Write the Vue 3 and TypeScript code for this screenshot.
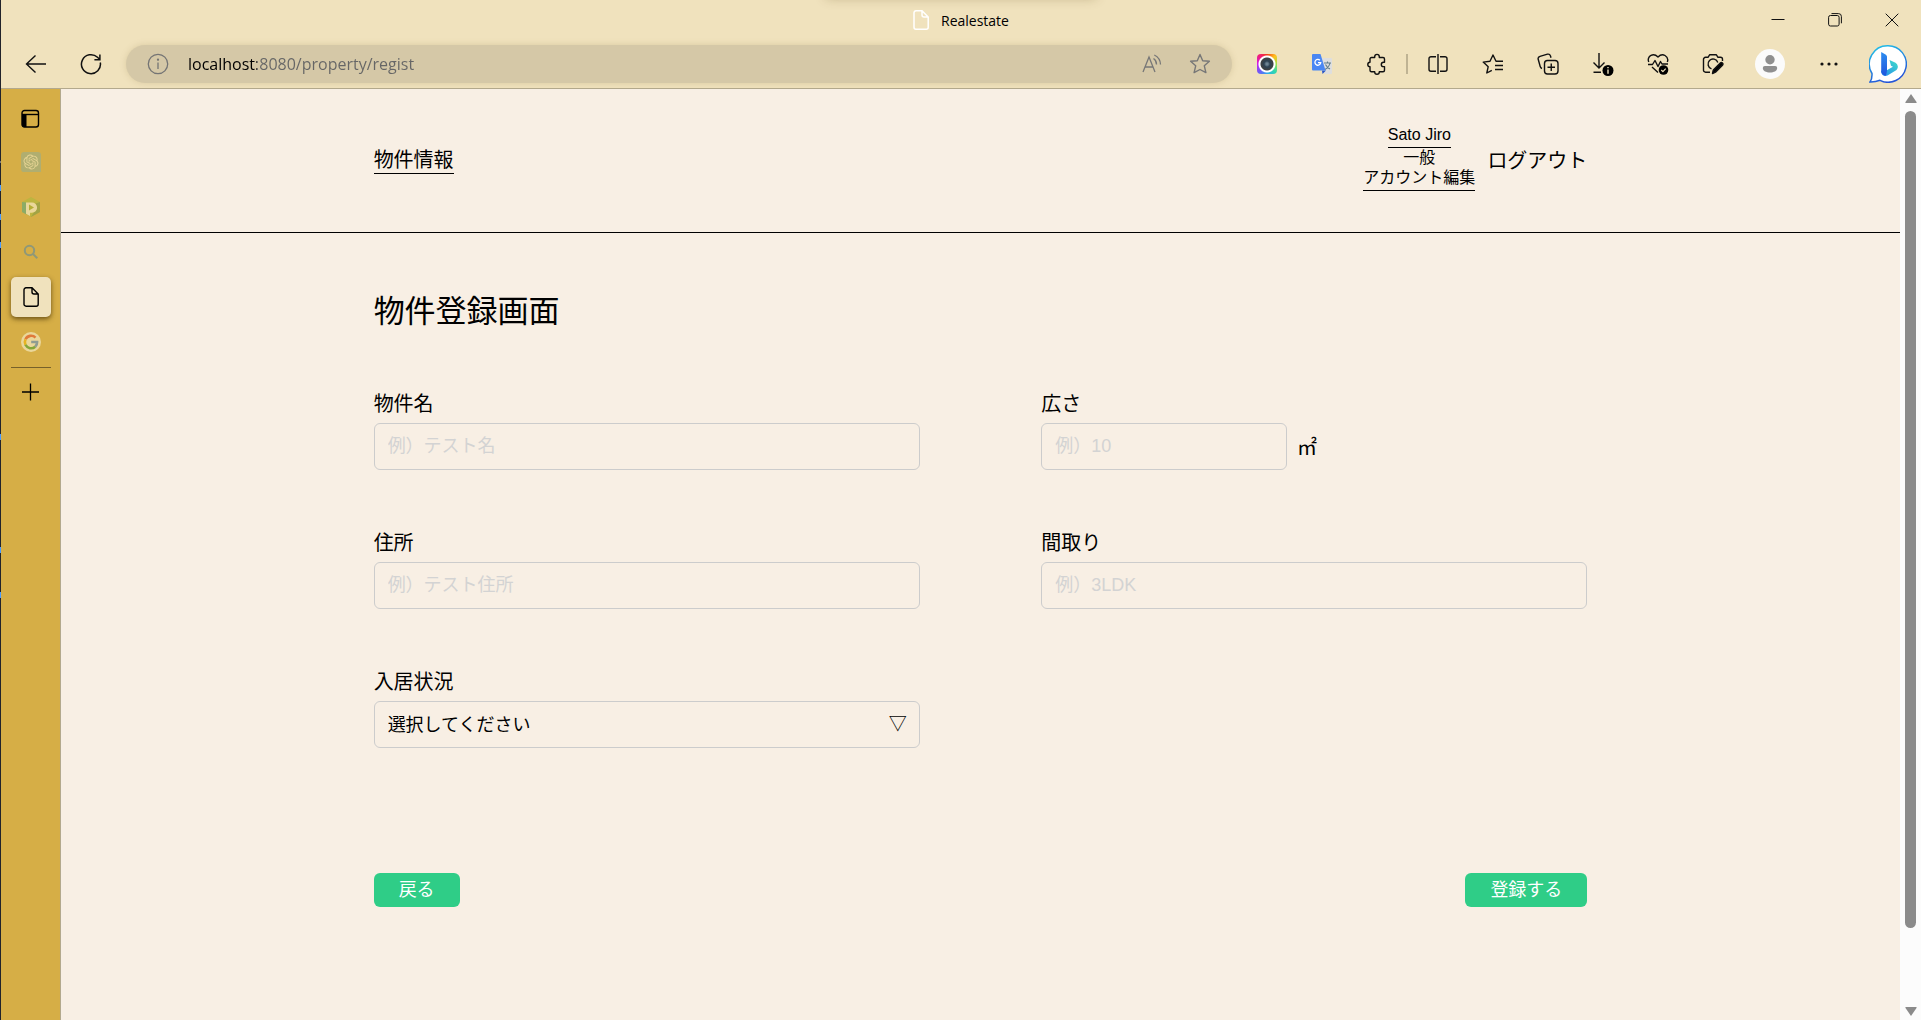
<script setup lang="ts">
import { ref } from 'vue'

interface Property {
  name: string
  area: string
  address: string
  layout: string
  status: string
}

const url = ref('localhost:8080/property/regist')
const property = ref<Property>({ name: '', area: '', address: '', layout: '', status: '' })
const statuses: string[] = ['入居中', '空室']
</script>

<template>
  <div class="desktop">
    <div class="edge"></div>
    <div class="window">
      <header class="chrome">
        <div class="titlebar">
          <div class="hint"></div>
          <div class="title">
            <svg width="16" height="20" viewBox="0 0 16 20" fill="none" stroke="#fff" stroke-width="1.5">
              <path d="M3 .8h6l6.200 6.200v10.200a2 2 0 0 1-2 2H3a2 2 0 0 1-2-2V2.800a2 2 0 0 1 2-2zM9 .8V5a2 2 0 0 0 2 2h4.200" />
            </svg>
            <span>Realestate</span>
          </div>
          <div class="window-buttons">
            <button type="button" aria-label="最小化">
              <svg width="14" height="14" viewBox="0 0 14 14" stroke="#111"><path d="M.5 6.500h13" /></svg>
            </button>
            <button type="button" aria-label="元に戻す">
              <svg width="14" height="14" viewBox="0 0 14 14" fill="none" stroke="#111">
                <rect x=".6" y="2.500" width="10.500" height="10.500" rx="1.800" />
                <path d="M3.500.6h7a2.900 2.900 0 0 1 2.900 2.900v6.800" />
              </svg>
            </button>
            <button type="button" aria-label="閉じる">
              <svg width="14" height="14" viewBox="0 0 14 14" stroke="#111"><path d="M.7.7l12.600 12.600M13.300.7.7 13.300" /></svg>
            </button>
          </div>
        </div>

        <div class="toolbar">
          <div class="nav-buttons">
            <button type="button" aria-label="戻る">
              <svg width="22" height="20" viewBox="0 0 22 20" fill="none" stroke="#111" stroke-width="1.400">
                <path d="M21 10H1.500M10.500 1.500 1.500 10l9 8.500" />
              </svg>
            </button>
            <button type="button" aria-label="更新">
              <svg width="22" height="22" viewBox="0 0 22 22" fill="none" stroke="#111" stroke-width="1.500">
                <path d="M20.300 9.500A9.500 9.500 0 1 1 17.500 4.300L19.800 6.500M19.900 1.500v5.300h-5.500" />
              </svg>
            </button>
          </div>
          <div class="address">
            <button type="button" aria-label="サイト情報">
              <svg width="22" height="22" viewBox="0 0 22 22" fill="none" stroke="#747474" stroke-width="1.300">
                <circle cx="11" cy="11" r="9.700" />
                <path d="M11 9.500V16" />
                <circle cx="11" cy="6.700" r=".5" fill="#747474" />
              </svg>
            </button>
            <input v-model="url" type="text" aria-label="アドレス" />
            <button type="button" aria-label="音声で読み上げる">
              <svg width="20" height="20" viewBox="0 0 20 20" fill="none" stroke="#777" stroke-width="1.300">
                <path d="M1 18 7 3l6 15M3 13h8M11.500 4.500a7 7 0 0 1 3 6M12.300 1a11 11 0 0 1 6.200 9.500" />
              </svg>
            </button>
            <button type="button" aria-label="お気に入りに追加">
              <svg width="22" height="22" viewBox="0 0 22 22" fill="none" stroke="#777" stroke-width="1.400" stroke-linejoin="round">
                <path d="m11 1.500 2.700 6.200 6.700.6-5.100 4.500 1.600 6.800-5.900-3.100-5.900 3.100 1.600-6.800L1.600 8.300l6.700-.6z" />
              </svg>
            </button>
          </div>

          <div class="tools">
            <button type="button" aria-label="カメラ拡張機能"><span class="lens"></span></button>
            <button type="button" aria-label="翻訳">
              <svg width="20" height="20" viewBox="0 0 20 20" fill="none">
                <path d="M8 4h11a1 1 0 0 1 1 1v14a1 1 0 0 1-1 1h-6z" fill="#dedede" />
                <path d="M12 9h7M15.500 7.500V9M18 9c-.6 3-2.500 5-5 6.500M13.500 10.500c1 2 2.500 3.500 4.500 4.500" stroke="#607d8b" stroke-width="1.100" />
                <path d="m10 16.500 4 0-3.500 3.500z" fill="#2a56c6" />
                <path d="M1 0h7.500l5 16.500H1a1 1 0 0 1-1-1V1a1 1 0 0 1 1-1z" fill="#4a87f3" />
                <path d="M7.900 6.300A2.900 2.900 0 1 0 8.700 8.700H6" stroke="#fff" stroke-width="1.300" />
              </svg>
            </button>
            <button type="button" aria-label="拡張機能">
              <svg width="20" height="22" viewBox="0 0 20 22" fill="none" stroke="#111" stroke-width="1.400" stroke-linejoin="round">
                <path d="M4.500 4.500h3.200v-.8a2.300 2.300 0 0 1 4.600 0v.8h3.700a1.500 1.500 0 0 1 1.500 1.500v3.200h-1a2.200 2.200 0 0 0 0 4.400h1v3.600a1.500 1.500 0 0 1-1.500 1.500h-3.700v.3a2.300 2.300 0 0 1-4.600 0v-.3H4.500A1.500 1.500 0 0 1 3 17.200v-3.600a2.200 2.200 0 0 1 0-4.400V6a1.500 1.500 0 0 1 1.500-1.500z" />
              </svg>
            </button>
            <i class="divider"></i>
            <button type="button" aria-label="画面を分割する">
              <svg width="20" height="20" viewBox="0 0 20 20" fill="none" stroke="#111" stroke-width="1.400">
                <path d="M8 2.700H3a2 2 0 0 0-2 2v10.600a2 2 0 0 0 2 2h5M12 2.700h5a2 2 0 0 1 2 2v10.600a2 2 0 0 1-2 2h-5M10 0v20" />
              </svg>
            </button>
            <button type="button" aria-label="お気に入り">
              <svg width="22" height="20" viewBox="0 0 22 20" fill="none" stroke="#111" stroke-width="1.400" stroke-linejoin="round">
                <path d="M21 7.300h-7L11 1 8 7.300l-6.800.8 5 4.600L4.800 19l5-2.700M13 11.500h8M13 15.500h8" />
              </svg>
            </button>
            <button type="button" aria-label="コレクション">
              <svg width="22" height="22" viewBox="0 0 22 22" fill="none" stroke="#111" stroke-width="1.400">
                <rect x="7.500" y="7.500" width="13.500" height="13.500" rx="3" />
                <path d="M14.250 10.500v7.500M10.500 14.250h7.500M5 15.500c-1-.4-1.500-1-1.800-2L1.200 6.300c-.4-1.500.3-2.500 1.800-3L10.500 1.200c1.500-.4 2.500.4 3 1.800l.5 1.800" />
              </svg>
            </button>
            <button type="button" aria-label="ダウンロード">
              <svg width="22" height="24" viewBox="0 0 22 24" fill="none" stroke="#111" stroke-width="1.400">
                <path d="M7 1v15M1.500 10.500 7 16l5.500-5.500M1.500 20.300H9" />
                <circle cx="16" cy="18.500" r="5.500" fill="#000" stroke="none" />
                <path d="M16 17.500v4.200M16 15v1.200" stroke="#f0e2bd" />
              </svg>
            </button>
            <button type="button" aria-label="ブラウザーのエッセンシャル">
              <svg width="22" height="22" viewBox="0 0 22 22" fill="none" stroke="#111" stroke-width="1.400" stroke-linejoin="round">
                <path d="M1.800 9A5 5 0 0 1 4 2.300C6.800 1 9 2 11 4c2-2 4.500-3 7-1.500 2.500 1.500 3.300 4 2.300 6.500M1 11.500h4.500L8 7.500l3 6 2.500-5 1.500 2.500h6M5 14l6 5.500" />
                <circle cx="16.500" cy="17" r="4.800" fill="#000" stroke="none" />
                <path d="m14.300 17 1.600 1.600 2.800-3" stroke="#f0e2bd" stroke-width="1.200" />
              </svg>
            </button>
            <button type="button" aria-label="スクリーンショット">
              <svg width="22" height="22" viewBox="0 0 22 22" fill="none" stroke="#111" stroke-width="1.400" stroke-linejoin="round">
                <path d="M8 19.200H3.500a2 2 0 0 1-2-2V6.300a2 2 0 0 1 2-2H6l1.600-2.500h6.800L16 4.300h2.500a2 2 0 0 1 2 2V8M9.500 15.800A5 5 0 1 1 15.800 9.500" />
                <path d="m10.500 20.500.8-3.500 7-7c1.500-1.300 3.500.6 2.200 2.200l-7 7z" fill="#000" />
              </svg>
            </button>
            <button type="button" class="wide" aria-label="プロファイル">
              <svg width="30" height="30" viewBox="0 0 30 30" fill="#8f8f8f">
                <circle cx="15" cy="15" r="15" fill="#fbfbfb" />
                <circle cx="15" cy="10.700" r="4.700" />
                <path d="M9.800 17h10.400a2 2 0 0 1 2 2c0 3-3.500 4.500-7.200 4.500S7.800 22 7.800 19a2 2 0 0 1 2-2z" />
              </svg>
            </button>
            <button type="button" class="wide" aria-label="設定など">
              <svg width="18" height="4" viewBox="0 0 18 4" fill="#111">
                <circle cx="2" cy="2" r="1.600" /><circle cx="9" cy="2" r="1.600" /><circle cx="16" cy="2" r="1.600" />
              </svg>
            </button>
            <button type="button" class="wide" aria-label="Bing">
              <svg width="38" height="38" viewBox="0 0 38 38">
                <defs>
                  <linearGradient id="bubble" x1="0" y1="0" x2=".4" y2="1">
                    <stop offset="0" stop-color="#22c8e8" /><stop offset="1" stop-color="#2455d8" />
                  </linearGradient>
                  <linearGradient id="stem" x1="0" y1="0" x2="0" y2="1">
                    <stop offset="0" stop-color="#2d8df0" /><stop offset="1" stop-color="#1f55dd" />
                  </linearGradient>
                  <linearGradient id="bowl" x1="1" y1="0" x2="0" y2="1">
                    <stop offset="0" stop-color="#3fe0c8" /><stop offset="1" stop-color="#2486f0" />
                  </linearGradient>
                </defs>
                <path d="M19 .8a18.200 18.200 0 1 1-8 34.500c-3 1.200-6.500 1.800-10 1.700 1.600-2.300 2.200-5 2-8.500A18.200 18.200 0 0 1 19 .8z" fill="#fff" stroke="url(#bubble)" stroke-width="1.500" />
                <path d="M20.500 15 26.500 17.800a4.500 4.500 0 0 1 1 7.200L18.500 30.500c-3.500 1.500-6.500-1-6.500-4.800l4 .5 8-4.500-2-1z" fill="url(#bowl)" />
                <path d="M12.200 7 16.500 9.500c1 .7 1.500 1.500 1.500 2.700V26l-1 4.500c-2.800.2-4.800-1.800-4.800-4.500z" fill="url(#stem)" />
              </svg>
            </button>
          </div>
        </div>
      </header>

      <div class="body">
        <nav class="tabs" aria-label="タブ">
          <button type="button" class="tab pane" aria-label="タブ操作メニュー">
            <svg width="20" height="20" viewBox="0 0 20 20" fill="none" stroke="#000" stroke-width="1.400">
              <rect x="1" y="1.500" width="16.500" height="16.500" rx="2.500" />
              <path d="M1 5.500h16.500" /><path d="M1 5h4.500v13h-2A2.500 2.500 0 0 1 1 15.500z" fill="#000" stroke="none" />
            </svg>
          </button>
          <div class="tab-list">
            <button type="button" class="tab" aria-label="ChatGPT">
              <svg width="20" height="20" viewBox="0 0 32 32">
                <path d="M5 0h22a5 5 0 0 1 5 5v27H5a5 5 0 0 1-5-5V5a5 5 0 0 1 5-5z" fill="#b0ae70" />
                <path transform="translate(4 4)" fill="#e6d494" d="M22.2819 9.8211a5.9847 5.9847 0 0 0-.5157-4.9108 6.0462 6.0462 0 0 0-6.5098-2.9A6.0651 6.0651 0 0 0 4.9807 4.1818a5.9847 5.9847 0 0 0-3.9977 2.9 6.0462 6.0462 0 0 0 .7427 7.0966 5.98 5.98 0 0 0 .511 4.9107 6.051 6.051 0 0 0 6.5146 2.9001A5.9847 5.9847 0 0 0 13.2599 24a6.0557 6.0557 0 0 0 5.7718-4.2058 5.9894 5.9894 0 0 0 3.9977-2.9001 6.0557 6.0557 0 0 0-.7475-7.0729zm-9.022 12.6081a4.4755 4.4755 0 0 1-2.8764-1.0408l.1419-.0804 4.7783-2.7582a.7948.7948 0 0 0 .3927-.6813v-6.7369l2.02 1.1686a.071.071 0 0 1 .038.052v5.5826a4.504 4.504 0 0 1-4.4945 4.4944zm-9.6607-4.1254a4.4708 4.4708 0 0 1-.5346-3.0137l.142.0852 4.783 2.7582a.7712.7712 0 0 0 .7806 0l5.8428-3.3685v2.3324a.0804.0804 0 0 1-.0332.0615L9.74 19.9502a4.4992 4.4992 0 0 1-6.1408-1.6464zM2.3408 7.8956a4.485 4.485 0 0 1 2.3655-1.9728V11.6a.7664.7664 0 0 0 .3879.6765l5.8144 3.3543-2.0201 1.1685a.0757.0757 0 0 1-.071 0l-4.8303-2.7865A4.504 4.504 0 0 1 2.3408 7.872zm16.5963 3.8558L13.1038 8.364 15.1192 7.2a.0757.0757 0 0 1 .071 0l4.8303 2.7913a4.4944 4.4944 0 0 1-.6765 8.1042v-5.6772a.79.79 0 0 0-.407-.667zm2.0107-3.0231l-.142-.0852-4.7735-2.7818a.7759.7759 0 0 0-.7854 0L9.409 9.2297V6.8974a.0662.0662 0 0 1 .0284-.0615l4.8303-2.7866a4.4992 4.4992 0 0 1 6.6802 4.66zM8.3065 12.863l-2.02-1.1638a.0804.0804 0 0 1-.038-.0567V6.0742a4.4992 4.4992 0 0 1 7.3757-3.4537l-.142.0805L8.704 5.459a.7948.7948 0 0 0-.3927.6813zm1.0976-2.3654l2.602-1.4998 2.6069 1.4998v2.9994l-2.5974 1.4997-2.6067-1.4997Z" />
              </svg>
            </button>
            <button type="button" class="tab" aria-label="動画">
              <svg width="20" height="20" viewBox="0 0 20 20">
                <path d="M10 0 19 5v10l-9 5-9-5V5z" fill="#bdb540" />
                <path d="M1 5v10l4.500 2.500V5.500z" fill="#8cab66" />
                <path d="m19 5-4.500 1.500L13 15l-3 5 9-5z" fill="#a2a344" />
                <path d="M5 5.500h6a5 5 0 0 1 0 10.200H9V19l-4-2.200z" fill="#ead79a" />
                <path d="M8 7.500v6l5-3z" fill="#b5ae35" />
              </svg>
            </button>
            <button type="button" class="tab" aria-label="検索">
              <svg width="20" height="20" viewBox="0 0 20 20" fill="none" stroke="#8f9878" stroke-width="2">
                <circle cx="8.500" cy="8.500" r="4.700" /><path d="m12 12 4.300 4.300" />
              </svg>
            </button>
            <button type="button" class="tab active" aria-label="Realestate">
              <svg width="16" height="20" viewBox="0 0 16 20" fill="none" stroke="#000" stroke-width="1.400">
                <path d="M3 .8h6l6.200 6.200v10.200a2 2 0 0 1-2 2H3a2 2 0 0 1-2-2V2.800a2 2 0 0 1 2-2zM9 .8V5a2 2 0 0 0 2 2h4.200" />
              </svg>
            </button>
            <button type="button" class="tab" aria-label="Google">
              <svg width="20" height="20" viewBox="0 0 20 20" fill="none" stroke-width="2.600">
                <circle cx="10" cy="10" r="10" fill="#ead79b" />
                <path d="M14.500 5.600A6.200 6.200 0 0 0 4.500 7.300" stroke="#e07a3a" />
                <path d="M4.500 7.300a6.200 6.200 0 0 0 0 5.500" stroke="#e6b422" />
                <path d="M4.500 12.800a6.200 6.200 0 0 0 9.700 1.900" stroke="#84a638" />
                <path d="M14.200 14.700A6.200 6.200 0 0 0 16.100 10H10.200" stroke="#8e9c92" />
              </svg>
            </button>
          </div>
          <i class="rule"></i>
          <button type="button" class="tab" aria-label="新しいタブ">
            <svg width="18" height="18" viewBox="0 0 18 18" stroke="#000" stroke-width="1.300"><path d="M8.500 .5v17M0 9h17" /></svg>
          </button>
        </nav>

        <div class="page">
          <header class="site-header">
            <a href="#" class="underlined brand">物件情報</a>
            <div class="account">
              <div class="user">
                <a href="#" class="underlined latin">Sato Jiro</a>
                <span>一般</span>
                <a href="#" class="underlined">アカウント編集</a>
              </div>
              <a href="#" class="logout">ログアウト</a>
            </div>
          </header>

          <main class="content">
            <h1>物件登録画面</h1>
            <form @submit.prevent>
              <div class="fields">
                <div class="field">
                  <label for="name">物件名</label>
                  <input id="name" v-model="property.name" type="text" placeholder="例）テスト名" />
                </div>
                <div class="field">
                  <label for="area">広さ</label>
                  <div class="with-unit">
                    <input id="area" v-model="property.area" type="text" placeholder="例）10" />
                    <span>㎡</span>
                  </div>
                </div>
                <div class="field">
                  <label for="address">住所</label>
                  <input id="address" v-model="property.address" type="text" placeholder="例）テスト住所" />
                </div>
                <div class="field">
                  <label for="layout">間取り</label>
                  <input id="layout" v-model="property.layout" type="text" placeholder="例）3LDK" />
                </div>
                <div class="field">
                  <label for="status">入居状況</label>
                  <div class="select">
                    <select id="status" v-model="property.status">
                      <option value="">選択してください</option>
                      <option v-for="status in statuses" :key="status" :value="status">{{ status }}</option>
                    </select>
                    <span class="arrow">▽</span>
                  </div>
                </div>
              </div>
              <div class="actions">
                <button type="button">戻る</button>
                <button type="submit">登録する</button>
              </div>
            </form>
          </main>
        </div>

        <div class="scrollbar">
          <svg width="12" height="9" viewBox="0 0 12 9" fill="#8b8b8b"><path d="M6 0 11.500 8a.6.6 0 0 1-.5 1H1a.6.6 0 0 1-.5-1z" /></svg>
          <div class="track"><div class="thumb"></div></div>
          <svg width="12" height="9" viewBox="0 0 12 9" fill="#8b8b8b"><path d="M6 9 11.500 1a.6.6 0 0 0-.5-1H1a.6.6 0 0 0-.5 1z" /></svg>
        </div>
      </div>
    </div>
  </div>
</template>

<style>
body {
  margin: 0;
  overflow: hidden;
}
</style>

<style scoped>
* {
  box-sizing: border-box;
}

button,
input,
select {
  font: inherit;
  color: inherit;
  background: none;
  border: 0;
  margin: 0;
  padding: 0;
}

svg {
  display: block;
  flex: none;
}

.desktop {
  display: flex;
  height: 100vh;
  color: #000;
  font-family: "Liberation Sans", "Noto Sans CJK JP", sans-serif;
  font-weight: 400;
}

/* Sliver of the window behind */
.edge {
  width: 1px;
  background: linear-gradient(
    #21232b 161px, #777 161px, #777 163px, #21232b 163px, #21232b 185px,
    #4a9cff 185px, #4a9cff 191px, #21232b 191px, #21232b 214px,
    #4a9cff 214px, #4a9cff 220px, #21232b 220px, #21232b 242px,
    #4a9cff 242px, #4a9cff 248px, #21232b 248px, #21232b 434px,
    #4a9cff 434px, #4a9cff 440px, #21232b 440px, #21232b 547px,
    #4a9cff 547px, #4a9cff 553px, #21232b 553px, #21232b 592px,
    #4a9cff 592px, #4a9cff 598px, #21232b 598px
  );
}

.window {
  flex: 1;
  min-width: 0;
  display: flex;
  flex-direction: column;
}

.chrome {
  background: #f0e2bd;
  border-bottom: 1px solid #b3a98d;
  font-family: "Open Sans", "Noto Sans", sans-serif;
}

.titlebar {
  position: relative;
  display: grid;
  grid-template-columns: 1fr auto 1fr;
  align-items: center;
  height: 40px;
  overflow: hidden;
}

.hint {
  position: absolute;
  top: -22px;
  left: 0;
  right: 0;
  width: 270px;
  height: 20px;
  margin: auto;
  box-shadow: 0 0 12px rgba(90, 70, 20, 0.3);
}

.title {
  grid-column: 2;
  display: flex;
  align-items: center;
  gap: 12px;
  font-size: 14px;
}

.window-buttons {
  display: flex;
  justify-content: flex-end;
  padding-right: 1px;
}

.window-buttons button {
  display: grid;
  place-items: center;
  width: 57px;
  height: 40px;
}

.toolbar {
  display: flex;
  align-items: center;
  height: 48px;
  padding-right: 4px;
}

.nav-buttons {
  display: flex;
  padding: 0 8px 0 7px;
}

.nav-buttons button,
.tools button {
  display: grid;
  place-items: center;
  width: 55px;
  height: 40px;
}

.tools {
  display: flex;
  align-items: center;
  padding-left: 7px;
}

.tools button.wide {
  width: 59px;
}

.address {
  flex: 1;
  display: flex;
  align-items: center;
  height: 38px;
  padding: 0 21px;
  border-radius: 19px;
  background: #d5c8a7;
  box-shadow: 0 0 6px rgba(150, 130, 80, 0.25);
}

.address input {
  flex: 1;
  min-width: 0;
  padding: 0 8px;
  margin-left: 11px;
  font-size: 16px;
  line-height: 24px;
  color: transparent;
  background: linear-gradient(to right, #000 77px, #666 77px);
  background-clip: text;
  outline: 0;
}

.address button + button,
.address input + button {
  margin-left: 27px;
}

.lens {
  display: block;
  width: 20px;
  height: 20px;
  border-radius: 4px;
  background:
    radial-gradient(circle, #6d8494 0 1px, #2f4252 3px 4px, #3c4145 5px 6px, #fff 7px 8px, transparent 9px),
    conic-gradient(#f43a1c, #ffc21c 45deg, #9be04a 90deg, #2fd8b0 135deg, #2fa8f0 180deg, #6f5cf5 225deg, #d01cf0 270deg, #f01c7a 315deg, #f43a1c);
}

.divider {
  width: 2px;
  height: 20px;
  margin: 0 2px;
  background: #bfb393;
}

.body {
  flex: 1;
  min-height: 0;
  display: flex;
  background: #f8efe4;
}

.tabs {
  display: flex;
  flex-direction: column;
  align-items: center;
  width: 60px;
  padding-top: 10px;
  background: #d6ae46;
  border-right: 1px solid #b3a98d;
}

.tab {
  display: grid;
  place-items: center;
  width: 40px;
  height: 40px;
  border-radius: 5px;
}

.tab.active {
  background: #f0e2bd;
  box-shadow: 0 2px 5px rgba(60, 40, 0, 0.7);
}

.tab-list {
  display: flex;
  flex-direction: column;
  gap: 5px;
  margin-top: 3px;
}

.rule {
  width: 40px;
  height: 1px;
  margin: 5px 0 4px;
  background: #77612a;
}

.page {
  flex: 1;
  min-width: 0;
  overflow: hidden;
}

.site-header {
  display: flex;
  align-items: center;
  justify-content: space-between;
  height: 144px;
  padding: 0 17%;
  border-bottom: 1px solid #000;
}

.page a {
  color: #000;
  text-decoration: none;
}

.page .underlined {
  border-bottom: 1px solid #000;
}

.brand,
.logout {
  font-size: 20px;
  line-height: 26px;
}

.account {
  display: flex;
  align-items: center;
  gap: 12px;
}

.user {
  display: flex;
  flex-direction: column;
  align-items: center;
  padding-bottom: 5px;
  font-size: 16px;
  line-height: 20px;
}

.user .underlined {
  padding-bottom: 2px;
}

.content {
  padding: 55px 17% 0;
}

h1 {
  margin: 0 0 53px;
  font-size: 31px;
  font-weight: inherit;
  line-height: 48px;
}

.fields {
  display: grid;
  grid-template-columns: 45% 45%;
  justify-content: space-between;
  row-gap: 58px;
}

.field {
  display: flex;
  flex-direction: column;
  gap: 3px;
  font-size: 20px;
}

.field label {
  line-height: 31px;
}

.field input,
.field select {
  width: 100%;
  height: 47px;
  padding: 0 13px;
  border: 1px solid #ccc;
  border-radius: 6px;
  font-size: 18px;
}

.field input::placeholder {
  color: #d3d3d3;
  opacity: 1;
}

.with-unit {
  display: flex;
  align-items: center;
  gap: 10px;
}

.with-unit input {
  width: 45%;
}

.select {
  position: relative;
}

.field select {
  appearance: none;
}

.arrow {
  position: absolute;
  top: 0;
  right: 13px;
  font-size: 18px;
  line-height: 47px;
  pointer-events: none;
}

.actions {
  display: flex;
  justify-content: space-between;
  margin-top: 125px;
}

.actions button {
  height: 34px;
  padding: 0 25px;
  border-radius: 6px;
  background: #2fcd87;
  color: #fff;
  font-size: 18px;
  line-height: 34px;
}

.scrollbar {
  display: flex;
  flex-direction: column;
  align-items: center;
  gap: 8px;
  width: 21px;
  padding: 5px 0 4px;
  background: #fcfcfc;
}

.track {
  flex: 1;
}

.thumb {
  width: 11px;
  height: 92%;
  border-radius: 6px;
  background: #8b8b8b;
}
</style>
